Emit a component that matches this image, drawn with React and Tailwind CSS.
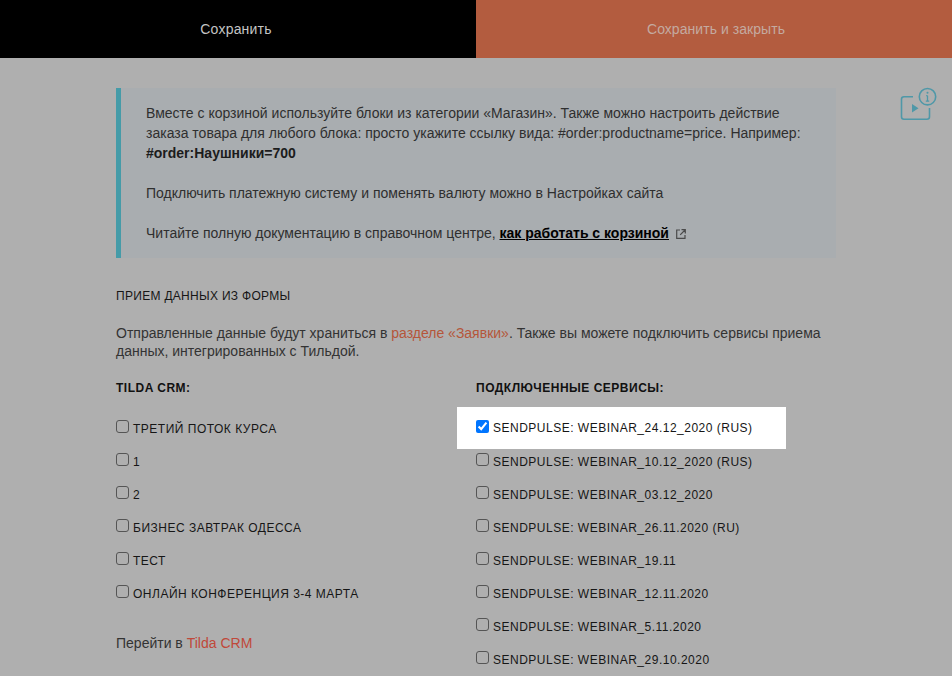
const CRM_LISTS = [
  "ТРЕТИЙ ПОТОК КУРСА",
  "1",
  "2",
  "БИЗНЕС ЗАВТРАК ОДЕССА",
  "ТЕСТ",
  "ОНЛАЙН КОНФЕРЕНЦИЯ 3-4 МАРТА",
];

const SERVICES = [
  "SENDPULSE: WEBINAR_10.12_2020 (RUS)",
  "SENDPULSE: WEBINAR_03.12_2020",
  "SENDPULSE: WEBINAR_26.11.2020 (RU)",
  "SENDPULSE: WEBINAR_19.11",
  "SENDPULSE: WEBINAR_12.11.2020",
  "SENDPULSE: WEBINAR_5.11.2020",
  "SENDPULSE: WEBINAR_29.10.2020",
];

function CheckRow({ label }) {
  return (
    <label className="flex items-start h-[33px] text-[12px] leading-[15px] tracking-[0.5px] text-[#161616]">
      <input
        type="checkbox"
        className="appearance-none w-[13px] h-[13px] mr-[4px] shrink-0 border border-[#555555] rounded-[3px]"
      />
      <span className="mt-[2px]">{label}</span>
    </label>
  );
}

export default function App() {
  return (
    <div className="w-[952px] h-[676px] overflow-hidden bg-[#afafaf] font-['Liberation_Sans',Arial,sans-serif] relative">
      <div className="flex h-[58px] text-[14px]">
        <div className="w-[476px] pr-[4px] bg-black text-[#c4c4c4] tracking-[0.2px] flex items-center justify-center">Сохранить</div>
        <div className="w-[476px] pl-[4px] bg-[#b35c3f] text-[#c4aaa0] tracking-[0.05px] flex items-center justify-center">Сохранить и закрыть</div>
      </div>

      <svg className="absolute left-[898px] top-[86px]" width="40" height="38" viewBox="0 0 40 38" fill="none" stroke="#4f98a8" strokeWidth="1.6">
        <path d="M15 10.7H6a2.5 2.5 0 0 0-2.5 2.5v17.6a2.5 2.5 0 0 0 2.5 2.5h23a2.5 2.5 0 0 0 2.5-2.5V22" />
        <path d="M14 18v8.5l6.5-4.2z" fill="#4f98a8" stroke="none" />
        <circle cx="29.5" cy="10.7" r="8.2" />
        <path d="M29.5 9.7v5.5M27.8 15.2h3.4M28.2 9.7h1.3" strokeWidth="1.3" />
        <circle cx="29.5" cy="6.7" r="1" fill="#4f98a8" stroke="none" />
      </svg>

      <div className="w-[720px] ml-[116px] pt-[30px]">
        <div className="h-[170px] bg-[#a9adb0] border-l-[5px] border-[#459ba8] pl-[25px] pr-[20px] pt-[15px] text-[14px] leading-[20px] text-[#2f2f2f]">
          <p>
            Вместе с корзиной используйте блоки из категории «Магазин». Также можно настроить действие заказа товара для любого блока: просто укажите ссылку вида: #order:productname=price. Например:{" "}
            <b className="text-[#1c1c1c]">#order:Наушники=700</b>
          </p>
          <p className="mt-[20px]">Подключить платежную систему и поменять валюту можно в Настройках сайта</p>
          <p className="mt-[20px] flex items-center">
            <span>
              Читайте полную документацию в справочном центре,{" "}
              <b className="text-black underline">как работать с корзиной</b>
            </span>
            <svg className="ml-[7px] mt-[2px]" width="10" height="10" viewBox="0 0 10 10" fill="none" stroke="#4a4a4a" strokeWidth="1.2">
              <path d="M4 1H.7v8.3H9V6M5.5.7h3.8v3.8M9 1 4.2 5.8" />
            </svg>
          </p>
        </div>

        <div className="mt-[31px] text-[12px] leading-[15px] tracking-[0.3px] text-[#161616]">ПРИЕМ ДАННЫХ ИЗ ФОРМЫ</div>

        <p className="mt-[20px] text-[14px] leading-[18px] text-[#333333]">
          Отправленные данные будут храниться в <span className="text-[#b5563a]">разделе «Заявки»</span>. Также вы можете подключить сервисы приема данных, интегрированных с Тильдой.
        </p>

        <div className="grid grid-cols-2 mt-[21px]">
          <div>
            <div className="text-[12px] leading-[15px] font-bold tracking-[0.5px] text-[#111111] mb-[24px]">TILDA CRM:</div>
            {CRM_LISTS.map((name) => (
              <CheckRow key={name} label={name} />
            ))}
            <p className="mt-[16px] text-[14px] leading-[18px] text-[#333333]">
              Перейти в <span className="text-[#c0483a]">Tilda CRM</span>
            </p>
          </div>
          <div>
            <div className="text-[12px] leading-[15px] font-bold tracking-[0.5px] text-[#111111] mb-[11px]">ПОДКЛЮЧЕННЫЕ СЕРВИСЫ:</div>
            <label className="flex items-start -ml-[19px] w-[329px] h-[42px] pl-[19px] pt-[13px] mb-[-1px] bg-white text-[12px] leading-[15px] tracking-[0.5px] text-[#161616]">
              <input type="checkbox" defaultChecked className="w-[13px] h-[13px] m-0 mr-[4px] shrink-0" />
              <span className="mt-[1px]">SENDPULSE: WEBINAR_24.12_2020 (RUS)</span>
            </label>
            <div className="pt-[5px]">
              {SERVICES.map((name) => (
                <CheckRow key={name} label={name} />
              ))}
            </div>
          </div>
        </div>
      </div>
    </div>
  );
}
